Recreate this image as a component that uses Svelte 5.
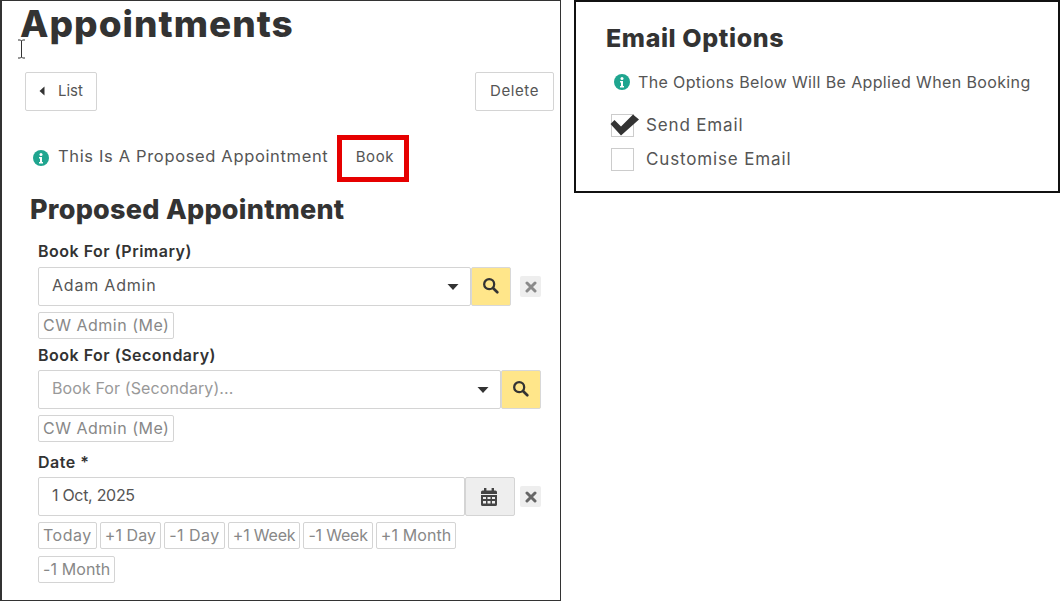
<script>
  const dateShortcuts = ["Today", "+1 Day", "-1 Day", "+1 Week", "-1 Week", "+1 Month", "-1 Month"];
</script>

{#snippet infoIcon()}
  <svg class="info" viewBox="0 0 16 16" aria-hidden="true">
    <circle cx="8" cy="8" r="8" fill="#1fa58f" />
    <circle cx="8" cy="4.4" r="1.5" fill="#fff" />
    <path d="M6 7h3v5h1v1.4H6V12h1V8.4H6z" fill="#fff" />
  </svg>
{/snippet}

{#snippet searchBtn()}
  <button class="search" aria-label="Search">
    <svg viewBox="0 0 18 18" width="17" height="17" aria-hidden="true">
      <circle cx="7.6" cy="7.6" r="5.3" fill="none" stroke="#333" stroke-width="2.4" />
      <path d="M11.6 11.6l4.6 4.6" stroke="#333" stroke-width="2.8" stroke-linecap="round" />
    </svg>
  </button>
{/snippet}

{#snippet clearBtn(shade)}
  <button class="clear" aria-label="Clear">
    <svg viewBox="0 0 12 12" width="12" height="12" aria-hidden="true">
      <path d="M2 2l8 8M10 2l-8 8" stroke={shade} stroke-width="3" stroke-linecap="round" />
    </svg>
  </button>
{/snippet}

{#snippet caret()}
  <svg class="caret" viewBox="0 0 12 6" width="12" height="6" aria-hidden="true">
    <path d="M0.5 0h11L6 6z" fill="#333" />
  </svg>
{/snippet}

<div class="page">
  <section class="booking">
    <h1>Appointments</h1>
    <svg class="ibeam" viewBox="0 0 9 20" width="9" height="20" aria-hidden="true">
      <path d="M1 1h2.5L4.5 2l1-1H8M1 19h2.5l1-1 1 1H8M4.5 2v16" fill="none" stroke="#333" stroke-width="1" />
    </svg>

    <div class="toolbar">
      <button class="btn list">
        <svg viewBox="0 0 6 10" width="6" height="10" aria-hidden="true"><path d="M5.5 0.5v9L0.5 5z" fill="#333" /></svg>
        <span>List</span>
      </button>
      <button class="btn delete">Delete</button>
    </div>

    <div class="proposed">
      {@render infoIcon()}
      <span class="msg">This Is A Proposed Appointment</span>
      <button class="book">Book</button>
    </div>

    <h2>Proposed Appointment</h2>

    <div class="form">
      <div class="label">Book For (Primary)</div>
      <div class="row first">
        <div class="select short"><span>Adam Admin</span>{@render caret()}</div>
        {@render searchBtn()}
        {@render clearBtn("#8a8a8a")}
      </div>
      <div class="chips"><button class="chip me">CW Admin (Me)</button></div>

      <div class="label second">Book For (Secondary)</div>
      <div class="row">
        <div class="select wide"><span class="placeholder">Book For (Secondary)...</span>{@render caret()}</div>
        {@render searchBtn()}
      </div>
      <div class="chips"><button class="chip me">CW Admin (Me)</button></div>

      <div class="label third">Date *</div>
      <div class="row">
        <div class="select date"><span class="date-value">1 Oct, 2025</span></div>
        <button class="calendar" aria-label="Pick date">
          <svg viewBox="0 0 16 18" width="16" height="18" aria-hidden="true">
            <path d="M3 0h2.4v2.4H10.6V0H13v2.4h1.4A1.6 1.6 0 0 1 16 4v2H0V4a1.6 1.6 0 0 1 1.6-1.6H3z" fill="#444" />
            <path fill-rule="evenodd" fill="#444" d="M0 7h16v9.4a1.6 1.6 0 0 1-1.6 1.6H1.6A1.6 1.6 0 0 1 0 16.4zM2 9v2h3V9zm4.5 0v2h3V9zM11 9v2h3V9zM2 13v2.5h3V13zm4.5 0v2.5h3V13zM11 13v2.5h3V13z" />
          </svg>
        </button>
        <span class="date-clear">{@render clearBtn("#666")}</span>
      </div>
      <div class="chips">
        {#each dateShortcuts as s}
          <button class="chip">{s}</button>
        {/each}
      </div>
    </div>
  </section>

  <section class="options">
    <h3>Email Options</h3>
    <div class="note">
      {@render infoIcon()}
      <span>The Options Below Will Be Applied When Booking</span>
    </div>
    <label class="check">
      <span class="box">
        <svg viewBox="0 0 30 22" width="30" height="22" aria-hidden="true">
          <path d="M0.5 10l4-4L11 12.5 23 0.5l6 5L11 21.5z" fill="#333" />
        </svg>
      </span>
      Send Email
    </label>
    <label class="check">
      <span class="box"></span>
      Customise Email
    </label>
  </section>
</div>

<style>
  :global(body) {
    background: #fff;
    font-family: "Inter", "Liberation Sans", sans-serif;
    color: #555;
  }

  button {
    font: inherit;
    background: #fff;
    padding: 0;
    cursor: pointer;
  }

  .page {
    display: flex;
    align-items: flex-start;
    gap: 13px;
    width: 1060px;
    height: 601px;
    overflow: hidden;
  }

  .booking {
    position: relative;
    box-sizing: border-box;
    width: 561px;
    height: 601px;
    flex: none;
    border: 1px solid #333;
    border-left-width: 2px;
  }

  h1 {
    margin: 0;
    padding-left: 18px;
    font-size: 37px;
    line-height: 46px;
    font-weight: 800;
    color: #333;
    letter-spacing: 1px;
  }

  .ibeam {
    position: absolute;
    left: 15px;
    top: 38px;
  }

  .toolbar {
    display: flex;
    justify-content: space-between;
    margin: 25px 6px 0 23px;
  }

  .btn {
    height: 39px;
    padding-bottom: 2px;
    border: 1px solid #d4d4d4;
    border-radius: 2px;
    font-size: 15px;
    color: #555;
  }

  .list {
    display: flex;
    align-items: center;
    gap: 13px;
    width: 72px;
    padding-left: 13px;
  }

  .delete {
    width: 79px;
    letter-spacing: 0.6px;
  }

  .proposed {
    display: flex;
    align-items: center;
    margin: 24px 0 0 31px;
  }

  .info {
    width: 16px;
    height: 16px;
    flex: none;
  }

  .proposed .info {
    margin-bottom: 1px;
  }

  .msg {
    margin: 0 0 5px 9px;
    font-size: 16.5px;
    letter-spacing: 0.65px;
    white-space: nowrap;
  }

  .book {
    margin-left: 9px;
    box-sizing: border-box;
    width: 72px;
    height: 47px;
    padding: 0 0 4px 3px;
    border: 5px solid #e60000;
    font-size: 15px;
    letter-spacing: 0.6px;
    color: #555;
  }

  h2 {
    margin: 10px 0 0 28px;
    font-size: 27px;
    line-height: 36px;
    font-weight: 800;
    color: #333;
    letter-spacing: 0.25px;
  }

  .form {
    margin: 13px 0 0 36px;
  }

  .label {
    font-size: 16px;
    line-height: 20px;
    font-weight: 600;
    color: #333;
    letter-spacing: 0.5px;
  }

  .label.second {
    margin-top: 6px;
  }

  .label.third {
    margin-top: 10px;
  }

  .row {
    display: flex;
    align-items: center;
    margin-top: 5px;
  }

  .row.first {
    margin-top: 6px;
  }

  .select {
    box-sizing: border-box;
    display: flex;
    align-items: center;
    justify-content: space-between;
    height: 39px;
    padding: 0 11px 3px 13px;
    border: 1px solid #d4d4d4;
    border-radius: 2px;
    font-size: 16px;
    letter-spacing: 0.8px;
    color: #555;
  }

  .select .caret {
    margin-top: 3px;
  }

  .short {
    width: 433px;
  }

  .wide {
    width: 463px;
  }

  .date {
    width: 427px;
  }

  .placeholder {
    color: #999;
    letter-spacing: 0.1px;
  }

  .date-value {
    letter-spacing: -0.3px;
  }

  .search {
    box-sizing: border-box;
    display: flex;
    align-items: center;
    justify-content: center;
    width: 40px;
    height: 39px;
    padding: 0 2px 2px 0;
    background: #ffe68a;
    border: 1px solid #d8d8d8;
    border-radius: 2px;
  }

  .clear {
    display: flex;
    align-items: center;
    justify-content: center;
    width: 21px;
    height: 21px;
    margin-left: 9px;
    background: #eee;
    border: none;
    border-radius: 2px;
  }

  .calendar {
    box-sizing: border-box;
    display: flex;
    align-items: center;
    justify-content: center;
    width: 50px;
    height: 39px;
    padding-right: 2px;
    background: #eee;
    border: 1px solid #d4d4d4;
    border-radius: 2px;
  }

  .date-clear {
    margin-left: -4px;
  }

  .chips {
    display: flex;
    flex-wrap: wrap;
    gap: 7px 3px;
    margin-top: 6px;
    width: 430px;
  }

  .chip {
    box-sizing: border-box;
    height: 27px;
    padding: 0 4px 1px;
    border: 1px solid #d4d4d4;
    border-radius: 2px;
    font-size: 16px;
    letter-spacing: 0.1px;
    color: #888;
    white-space: nowrap;
  }

  .chip:nth-child(1),
  .chip:nth-child(3) {
    letter-spacing: 0.5px;
  }

  .chip:nth-child(4),
  .chip:nth-child(5) {
    letter-spacing: -0.2px;
  }

  .chip.me {
    letter-spacing: 0.5px;
  }

  .options {
    box-sizing: border-box;
    width: 486px;
    height: 193px;
    flex: none;
    padding: 20px 0 0 30px;
    border: 2px solid #111;
  }

  h3 {
    margin: 0;
    font-size: 25px;
    line-height: 32px;
    font-weight: 800;
    color: #333;
    letter-spacing: 0.6px;
  }

  .note {
    display: flex;
    align-items: center;
    gap: 8px;
    margin: 18px 0 0 8px;
    font-size: 16px;
    letter-spacing: 0.37px;
    white-space: nowrap;
  }

  .check {
    display: flex;
    align-items: center;
    gap: 12px;
    height: 24px;
    margin: 10px 0 0 5px;
    font-size: 17px;
    letter-spacing: 0.85px;
    color: #555;
  }

  .note + .check {
    margin-top: 21px;
  }

  .box {
    position: relative;
    box-sizing: border-box;
    width: 23px;
    height: 23px;
    border: 1px solid #ccc;
  }

  .box svg {
    position: absolute;
    left: -2px;
    top: -1px;
  }
</style>
